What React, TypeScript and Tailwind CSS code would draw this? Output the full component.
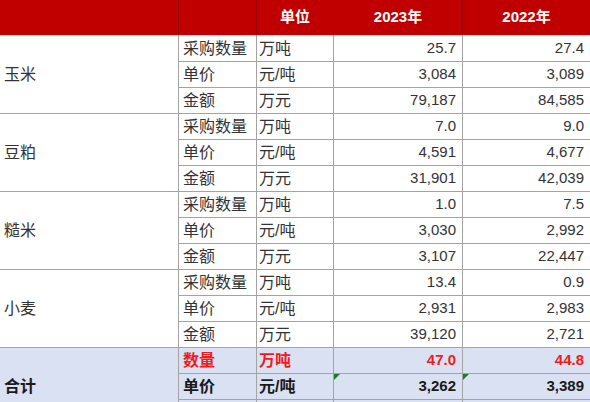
import React from "react";

type Row = { item: string; unit: string; a: string; b: string };
type Group = { name: string; rows: Row[] };

const groups: Group[] = [
  {
    name: "玉米",
    rows: [
      { item: "采购数量", unit: "万吨", a: "25.7", b: "27.4" },
      { item: "单价", unit: "元/吨", a: "3,084", b: "3,089" },
      { item: "金额", unit: "万元", a: "79,187", b: "84,585" },
    ],
  },
  {
    name: "豆粕",
    rows: [
      { item: "采购数量", unit: "万吨", a: "7.0", b: "9.0" },
      { item: "单价", unit: "元/吨", a: "4,591", b: "4,677" },
      { item: "金额", unit: "万元", a: "31,901", b: "42,039" },
    ],
  },
  {
    name: "糙米",
    rows: [
      { item: "采购数量", unit: "万吨", a: "1.0", b: "7.5" },
      { item: "单价", unit: "元/吨", a: "3,030", b: "2,992" },
      { item: "金额", unit: "万元", a: "3,107", b: "22,447" },
    ],
  },
  {
    name: "小麦",
    rows: [
      { item: "采购数量", unit: "万吨", a: "13.4", b: "0.9" },
      { item: "单价", unit: "元/吨", a: "2,931", b: "2,983" },
      { item: "金额", unit: "万元", a: "39,120", b: "2,721" },
    ],
  },
];

const font = { fontFamily: '"Liberation Sans", "Noto Sans CJK SC", sans-serif' };

function Tri() {
  return (
    <span className="absolute left-0 top-0 w-0 h-0 border-t-[6px] border-r-[6px] border-t-[#1f7a2e] border-r-transparent" />
  );
}

export default function App() {
  const line = "border-[#a3a3a3]";
  return (
    <div className="w-[590px] h-[402px] overflow-hidden bg-white" style={font}>
      <div className="grid grid-cols-[179px_78px_77px_129px_127px] grid-rows-[36px_repeat(15,26px)]">
        {/* header */}
        <div className="bg-[#c00000] border-r border-r-[#9a0000] border-b border-b-[#f0e0e0]" />
        <div className="bg-[#c00000] border-r border-r-[#9a0000] border-b border-b-[#f0e0e0]" />
        <div className="bg-[#c00000] border-r border-r-[#9a0000] border-b border-b-[#f0e0e0] flex items-center justify-center text-white font-bold text-[15px]">
          单位
        </div>
        <div className="bg-[#c00000] border-r border-r-[#9a0000] border-b border-b-[#f0e0e0] flex items-center justify-center text-white font-bold text-[15px]">
          2023年
        </div>
        <div className="bg-[#c00000] border-b border-b-[#f0e0e0] flex items-center justify-center text-white font-bold text-[15px]">
          2022年
        </div>

        {groups.map((g) => (
          <React.Fragment key={g.name}>
            <div className={`row-span-3 border-r border-b ${line} flex items-center pl-[4px] text-[16px] text-[#333]`}>
              {g.name}
            </div>
            {g.rows.map((r) => (
              <React.Fragment key={r.item}>
                <div className={`border-r border-b ${line} flex items-center pl-[4px] text-[16px] text-[#333]`}>
                  {r.item}
                </div>
                <div className={`border-r border-b ${line} flex items-center pl-[2px] text-[16px] text-[#333]`}>
                  {r.unit}
                </div>
                <div className={`border-r border-b ${line} flex items-center justify-end pr-[6px] text-[15px] text-[#333]`}>
                  {r.a}
                </div>
                <div className={`border-b ${line} flex items-center justify-end pr-[6px] text-[15px] text-[#333]`}>
                  {r.b}
                </div>
              </React.Fragment>
            ))}
          </React.Fragment>
        ))}

        {/* totals */}
        <div className={`row-span-3 bg-[#d9e1f2] border-r border-b ${line} flex items-center pl-[4px] text-[16px] font-bold text-[#1a1a1a]`}>
          合计
        </div>
        <div className={`bg-[#d9e1f2] border-r border-b ${line} flex items-center pl-[4px] text-[16px] font-bold text-[#ee1c1c]`}>
          数量
        </div>
        <div className={`bg-[#d9e1f2] border-r border-b ${line} flex items-center pl-[2px] text-[16px] font-bold text-[#ee1c1c]`}>
          万吨
        </div>
        <div className={`bg-[#d9e1f2] border-r border-b ${line} flex items-center justify-end pr-[6px] text-[15px] font-bold text-[#ee1c1c]`}>
          47.0
        </div>
        <div className={`bg-[#d9e1f2] border-b ${line} flex items-center justify-end pr-[6px] text-[15px] font-bold text-[#ee1c1c]`}>
          44.8
        </div>

        <div className={`bg-[#d9e1f2] border-r border-b ${line} flex items-center pl-[4px] text-[16px] font-bold text-[#1a1a1a]`}>
          单价
        </div>
        <div className={`bg-[#d9e1f2] border-r border-b ${line} flex items-center pl-[2px] text-[16px] font-bold text-[#1a1a1a]`}>
          元/吨
        </div>
        <div className={`relative bg-[#d9e1f2] border-r border-b ${line} flex items-center justify-end pr-[6px] text-[15px] font-bold text-[#1a1a1a]`}>
          <Tri />
          3,262
        </div>
        <div className={`relative bg-[#d9e1f2] border-b ${line} flex items-center justify-end pr-[6px] text-[15px] font-bold text-[#1a1a1a]`}>
          <Tri />
          3,389
        </div>

        <div className={`bg-[#d9e1f2] border-r border-b ${line}`} />
        <div className={`bg-[#d9e1f2] border-r border-b ${line}`} />
        <div className={`bg-[#d9e1f2] border-r border-b ${line}`} />
        <div className={`bg-[#d9e1f2] border-b ${line}`} />
      </div>
    </div>
  );
}
